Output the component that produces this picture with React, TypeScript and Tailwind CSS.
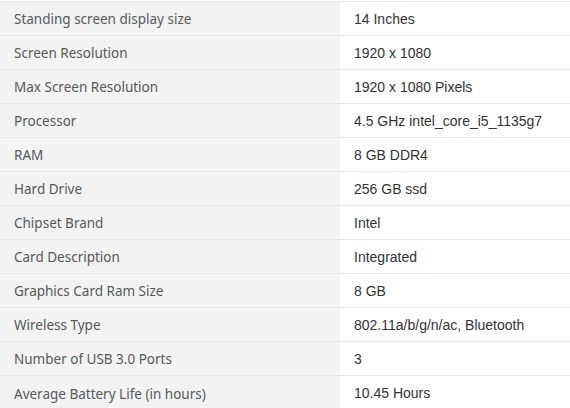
import React from 'react'

const specs: [string, string][] = [
	['Standing screen display size', '14 Inches'],
	['Screen Resolution', '1920 x 1080'],
	['Max Screen Resolution', '1920 x 1080 Pixels'],
	['Processor', '4.5 GHz intel_core_i5_1135g7'],
	['RAM', '8 GB DDR4'],
	['Hard Drive', '256 GB ssd'],
	['Chipset Brand', 'Intel'],
	['Card Description', 'Integrated'],
	['Graphics Card Ram Size', '8 GB'],
	['Wireless Type', '802.11a/b/g/n/ac, Bluetooth'],
	['Number of USB 3.0 Ports', '3'],
	['Average Battery Life (in hours)', '10.45 Hours'],
]

export default function App() {
	return (
		<div className="w-[570px] h-[408px] overflow-hidden bg-white pt-px">
			<table className="w-full border-collapse">
				<tbody>
					{specs.map(([label, value]) => (
						<tr key={label} className="border-t border-[#e7e7e7] h-[34px]">
							<td className="w-[340px] bg-[#f3f3f3] pl-[14px] pt-[2px] text-[13.5px] text-[#565959] font-['Noto_Sans',sans-serif] align-middle">
								{label}
							</td>
							<td className="pl-[14px] pt-[2px] text-[14px] text-[#333333] font-['Liberation_Sans',Arial,sans-serif] align-middle">
								{value}
							</td>
						</tr>
					))}
				</tbody>
			</table>
		</div>
	)
}
